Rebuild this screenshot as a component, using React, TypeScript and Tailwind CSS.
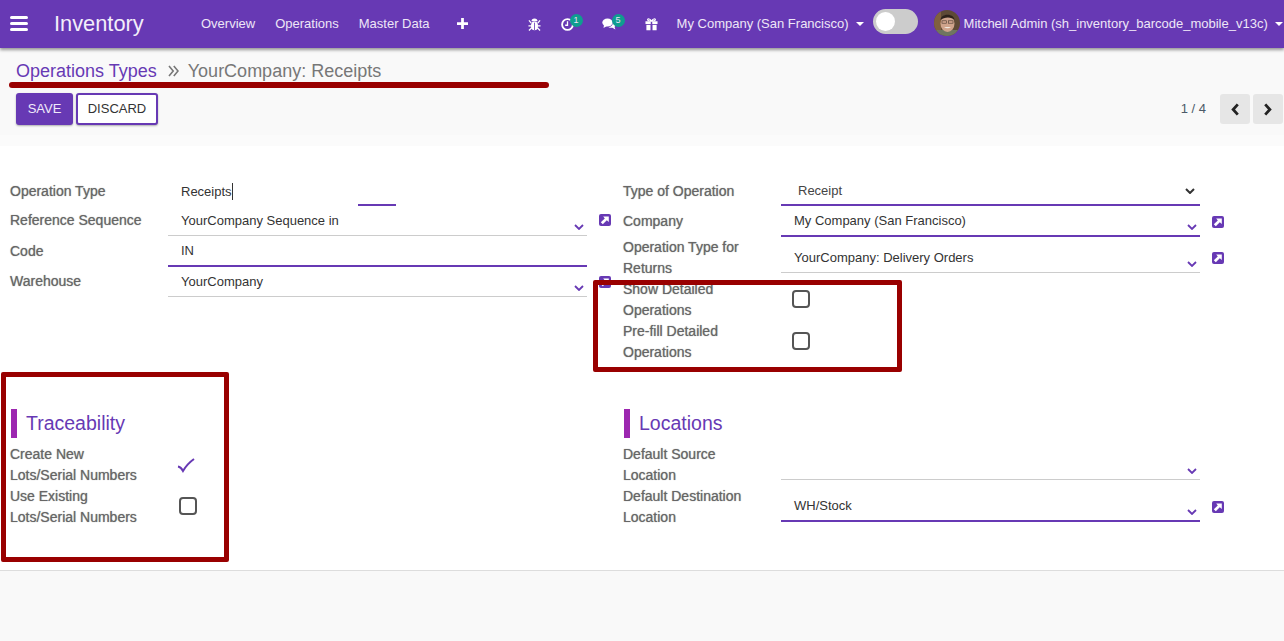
import React from "react";

const font = { fontFamily: '"Liberation Sans", Arial, sans-serif' };

function Ext({ className = "" }: { className?: string }) {
  return (
    <svg viewBox="0 0 12 12" className={"w-3 h-3 shrink-0 " + className}>
      <rect width="12" height="12" rx="2" fill="#6739b4" />
      <path d="M3.8 10.2 L1.8 8.2 L5.8 4.4 L4.2 2.4 H9.8 V8 L7.8 6.2 Z" fill="#fff" />
    </svg>
  );
}

function Chev({ dark = false }: { dark?: boolean }) {
  return (
    <svg viewBox="0 0 10 6" className="w-[10px] h-[6px]">
      <path d="M1 1 L5 5 L9 1" fill="none" stroke={dark ? "#333" : "#6739b4"} strokeWidth={dark ? 2 : 1.8} />
    </svg>
  );
}

function Label({ children, className = "" }: { children: React.ReactNode; className?: string }) {
  return (
    <div
      className={
        "w-[158px] shrink-0 text-[14px] leading-[21px] text-[#666] [text-shadow:0_0_1px_rgba(0,0,0,0.45)] " + className
      }
    >
      {children}
    </div>
  );
}

function Field({
  value,
  purple = false,
  chev = true,
  h,
  pad = "pl-[13px]",
}: {
  value: string;
  purple?: boolean;
  chev?: boolean;
  h: string;
  pad?: string;
}) {
  return (
    <div
      className={
        "relative w-[419px] flex items-start text-[13px] text-[#333] " +
        h +
        " " +
        pad +
        (purple ? " border-b-2 border-[#6739b4]" : " border-b border-[#ccc]")
      }
    >
      <span className="pt-[5px] leading-[20px]">{value}</span>
      {chev && (
        <span className="absolute right-[3px] bottom-[5px] flex">
          <Chev />
        </span>
      )}
    </div>
  );
}

function Check({ checked = false }: { checked?: boolean }) {
  if (checked) {
    return (
      <svg viewBox="0 0 18 16" className="w-[18px] h-4">
        <path d="M1 8.5 Q4 9 6 13 Q10 6 17 1" fill="none" stroke="#6739b4" strokeWidth="2" />
      </svg>
    );
  }
  return <div className="w-[18px] h-[18px] rounded-[4px] border-2 border-[#555] bg-white" />;
}

function Section({ title }: { title: string }) {
  return (
    <div className="flex items-center h-[29px] pl-px">
      <div className="w-[6px] h-[29px] bg-[#9c27b0]" />
      <div className="ml-[9px] text-[19.5px] leading-[29px] text-[#6739b4]">{title}</div>
    </div>
  );
}

function Bug() {
  return (
    <svg viewBox="0 0 14 14" className="w-[13px] h-[13px]" fill="#fff">
      <ellipse cx="7" cy="8.5" rx="3.8" ry="4.6" />
      <path d="M3.8 3.6 A3.2 3 0 0 1 10.2 3.6 Z" />
      <path d="M1 2.5 L3.5 5.5 M13 2.5 L10.5 5.5 M0.5 8.5 H3.5 M13.5 8.5 H10.5 M1 13.5 L4 10.5 M13 13.5 L10 10.5" stroke="#fff" strokeWidth="1.3" />
      <path d="M7 5 V13" stroke="#6739b4" strokeWidth="0.9" />
    </svg>
  );
}

function Clock() {
  return (
    <svg viewBox="0 0 14 14" className="w-[13px] h-[13px]">
      <circle cx="7" cy="7" r="5.8" fill="none" stroke="#fff" strokeWidth="2" />
      <path d="M7 3.5 V7.8 H4.5" fill="none" stroke="#fff" strokeWidth="1.4" />
    </svg>
  );
}

function Chat() {
  return (
    <svg viewBox="0 0 14 12" className="w-[14px] h-3" fill="#fff">
      <ellipse cx="5.5" cy="4.5" rx="5.2" ry="4" />
      <path d="M2 7 L1.5 10 L5 8 Z" />
      <path d="M11 3.5 C13 4.5 14 6 13.4 7.6 C13 8.6 12.6 9 12.6 9 L13.4 11.4 L10.4 9.8 C9 10 7.4 9.8 6.4 9 C9 9 11.4 7 11 3.5 Z" />
    </svg>
  );
}

function Gift() {
  return (
    <svg viewBox="0 0 14 14" className="w-[13px] h-[13px]" fill="#fff">
      <rect x="0.5" y="3.5" width="13" height="3" />
      <rect x="1.5" y="7.4" width="4.4" height="5.8" />
      <rect x="8.1" y="7.4" width="4.4" height="5.8" />
      <rect x="6.2" y="3.5" width="1.6" height="3" fill="#6739b4" />
      <path d="M7 3.4 C5.5 0.5 2.8 0.4 2.8 2 C2.8 3.4 5.5 3.4 7 3.4 Z M7 3.4 C8.5 0.5 11.2 0.4 11.2 2 C11.2 3.4 8.5 3.4 7 3.4 Z" fill="none" stroke="#fff" strokeWidth="1.2" />
    </svg>
  );
}

function Badge({ n }: { n: number }) {
  return (
    <span className="absolute -top-[4px] -right-[9px] w-[13px] h-[13px] rounded-full bg-[#0f9d8f] text-[9px] leading-[13px] text-center text-[#e8e0f5]">
      {n}
    </span>
  );
}

function Caret() {
  return <span className="inline-block w-0 h-0 border-x-[4px] border-x-transparent border-t-[4px] border-t-white" />;
}

function Avatar() {
  return (
    <svg viewBox="0 0 26 26" className="w-[26px] h-[26px] rounded-full shrink-0">
      <rect width="26" height="26" fill="#5e4a36" />
      <rect x="0" y="0" width="7" height="26" fill="#80603f" />
      <rect x="0" y="20" width="26" height="6" fill="#6f7560" />
      <ellipse cx="13.5" cy="13.5" rx="7" ry="8.5" fill="#cfa48c" />
      <path d="M6.5 10 C7 3 20 3 20.5 10 C18 6.5 10 6.5 6.5 10 Z" fill="#2e221a" />
      <rect x="8" y="10.8" width="4.6" height="2.4" fill="none" stroke="#4a3a30" strokeWidth="0.6" />
      <rect x="14.4" y="10.8" width="4.6" height="2.4" fill="none" stroke="#4a3a30" strokeWidth="0.6" />
      <path d="M10 17 Q13.5 19.5 17 17" fill="#f0e8e0" />
    </svg>
  );
}

export default function App() {
  return (
    <div style={font} className="relative w-[1284px] h-[641px] overflow-hidden bg-[#f9f9f9]">
      {/* Navbar */}
      <header className="relative z-10 h-12 bg-[#6739b4] shadow-[0_2px_3px_rgba(0,0,0,0.4)] flex items-center text-[#eee6f7] text-[13px] whitespace-nowrap">
        <div className="ml-[10px] w-[18px] flex flex-col gap-[3px] mb-[2px]">
          <div className="h-[3px] rounded-sm bg-white" />
          <div className="h-[3px] rounded-sm bg-white" />
          <div className="h-[3px] rounded-sm bg-white" />
        </div>
        <div className="ml-[26px] w-[90px] text-[21.8px] leading-none text-[#f3eefa]">Inventory</div>
        <div className="ml-[57px]">Overview</div>
        <div className="ml-5">Operations</div>
        <div className="ml-5">Master Data</div>
        <div className="ml-[27px] mb-[2px]">
          <svg viewBox="0 0 12 12" className="w-[11px] h-[11px]">
            <path d="M4.5 0 H7.5 V4.5 H12 V7.5 H7.5 V12 H4.5 V7.5 H0 V4.5 H4.5 Z" fill="#fff" />
          </svg>
        </div>
        <div className="ml-[60px]">
          <Bug />
        </div>
        <div className="relative ml-5">
          <Clock />
          <Badge n={1} />
        </div>
        <div className="relative ml-7">
          <Chat />
          <Badge n={5} />
        </div>
        <div className="ml-[29px]">
          <Gift />
        </div>
        <div className="ml-[19px]">My Company (San Francisco)</div>
        <div className="ml-[7px] flex">
          <Caret />
        </div>
        <div className="ml-[9px] mb-[5px] w-[45px] h-[25px] rounded-full bg-[#ccc] flex items-center pl-[3px]">
          <div className="w-[19px] h-[19px] rounded-full bg-white" />
        </div>
        <div className="ml-4 mb-[2px]">
          <Avatar />
        </div>
        <div className="ml-1">Mitchell Admin (sh_inventory_barcode_mobile_v13c)</div>
        <div className="ml-[7px] flex">
          <Caret />
        </div>
      </header>

      {/* Control panel */}
      <div className="h-[87px] bg-[#f9f9f9] relative">
        <div className="pl-4 pt-[11px] flex items-center text-[18px] leading-[24px]">
          <span className="text-[#6739b4]">Operations Types</span>
          <span className="ml-[11px] flex">
            <svg viewBox="0 0 11 12" className="w-[11px] h-3">
              <path d="M1 1 L5.2 6 L1 11 M5.8 1 L10 6 L5.8 11" fill="none" stroke="#777" strokeWidth="1.6" />
            </svg>
          </span>
          <span className="ml-[9px] text-[#777]">YourCompany: Receipts</span>
        </div>
        <div className="pl-4 pt-[10px] flex items-center gap-[3px] text-[13px]">
          <div className="w-[57px] h-8 rounded-[3px] bg-[#6739b4] text-[#f0eafa] flex items-center justify-center shadow-[0_1px_2px_rgba(0,0,0,0.3)]">
            SAVE
          </div>
          <div className="w-[82px] h-8 rounded-[3px] border-2 border-[#6739b4] bg-white text-[#333] flex items-center justify-center shadow-[0_1px_2px_rgba(0,0,0,0.3)]">
            DISCARD
          </div>
          <div className="ml-auto mr-[78px] text-[#4c5a68]">1 / 4</div>
        </div>
        <div className="absolute right-[1px] top-[46px] flex gap-[3px]">
          <div className="w-[30px] h-[30px] rounded-[3px] bg-[#e6e6e6] flex items-center justify-center">
            <svg viewBox="0 0 10 14" className="w-[10px] h-[13px]">
              <path d="M8 1.5 L3 7 L8 12.5" fill="none" stroke="#222" strokeWidth="3" />
            </svg>
          </div>
          <div className="w-[30px] h-[30px] rounded-[3px] bg-[#e6e6e6] flex items-center justify-center">
            <svg viewBox="0 0 10 14" className="w-[10px] h-[13px]">
              <path d="M2 1.5 L7 7 L2 12.5" fill="none" stroke="#222" strokeWidth="3" />
            </svg>
          </div>
        </div>
      </div>

      {/* Band */}
      <div className="h-[11px] bg-[#fbfbfb]" />

      {/* Sheet */}
      <main className="h-[425px] bg-white border-b border-[#ddd] pl-[10px] pt-[30px]">
        <div className="flex">
          {/* Left column */}
          <div className="w-[613px] shrink-0">
            <div className="flex items-start h-[30px]">
              <Label className="pt-[5px]">Operation Type</Label>
              <div className="relative w-[419px] h-[30px] pl-[13px] text-[13px] text-[#333]">
                <span className="inline-block border-r border-[#333] h-[17px] mt-[7px] leading-[17px]">Receipts</span>
                <div className="absolute left-[190px] bottom-0 w-[38px] h-[2px] bg-[#6739b4]" />
              </div>
            </div>
            <div className="flex items-start h-[30px]">
              <Label className="pt-[4px]">Reference Sequence</Label>
              <Field value="YourCompany Sequence in" h="h-[30px]" />
              <Ext className="ml-3 mt-[8px]" />
            </div>
            <div className="flex items-start h-[31px]">
              <Label className="pt-[5px]">Code</Label>
              <Field value="IN" purple chev={false} h="h-[31px]" />
            </div>
            <div className="flex items-start h-[30px]">
              <Label className="pt-[4px]">Warehouse</Label>
              <Field value="YourCompany" h="h-[30px]" />
              <Ext className="ml-3 mt-[9px]" />
            </div>
          </div>
          {/* Right column */}
          <div className="flex-1">
            <div className="flex items-start h-[30px]">
              <Label className="pt-[5px]">Type of Operation</Label>
              <div className="relative w-[419px] h-[30px] pl-[17px] text-[13px] text-[#444] border-b-2 border-[#6739b4]">
                <span className="inline-block pt-[5px] leading-[20px]">Receipt</span>
                <span className="absolute right-[5px] top-[12px] flex">
                  <Chev dark />
                </span>
              </div>
            </div>
            <div className="flex items-start h-[31px]">
              <Label className="pt-[5px]">Company</Label>
              <Field value="My Company (San Francisco)" purple h="h-[31px]" />
              <Ext className="ml-3 mt-[10px]" />
            </div>
            <div className="flex items-start h-[42px]">
              <Label>
                Operation Type for
                <br />
                Returns
              </Label>
              <Field value="YourCompany: Delivery Orders" h="h-[36px]" pad="pl-[13px] pt-[6px]" />
              <Ext className="ml-3 mt-[15px]" />
            </div>
            <div className="flex items-start h-[42px]">
              <Label>
                Show Detailed
                <br />
                Operations
              </Label>
              <div className="pl-[11px] pt-[11px]">
                <Check />
              </div>
            </div>
            <div className="flex items-start h-[42px]">
              <Label>
                Pre-fill Detailed
                <br />
                Operations
              </Label>
              <div className="pl-[11px] pt-[11px]">
                <Check />
              </div>
            </div>
          </div>
        </div>

        <div className="flex mt-[46px]">
          <div className="w-[613px] shrink-0">
            <Section title="Traceability" />
            <div className="mt-[6px] flex items-start h-[42px]">
              <Label className="w-[167px]">
                Create New
                <br />
                Lots/Serial Numbers
              </Label>
              <div className="pt-[14px]">
                <Check checked />
              </div>
            </div>
            <div className="flex items-start h-[42px]">
              <Label className="w-[169px]">
                Use Existing
                <br />
                Lots/Serial Numbers
              </Label>
              <div className="pt-[11px]">
                <Check />
              </div>
            </div>
          </div>
          <div className="flex-1">
            <Section title="Locations" />
            <div className="mt-[6px] flex items-start h-[42px]">
              <Label>
                Default Source
                <br />
                Location
              </Label>
              <Field value="" h="h-[36px]" />
            </div>
            <div className="flex items-start h-[42px]">
              <Label>
                Default Destination
                <br />
                Location
              </Label>
              <Field value="WH/Stock" purple h="h-[36px]" pad="pl-[13px] pt-[5px]" />
              <Ext className="ml-3 mt-[15px]" />
            </div>
          </div>
        </div>
      </main>

      {/* Annotation overlays */}
      <div className="absolute left-[9px] top-[82px] w-[540px] h-[6px] rounded-[3px] bg-[#990000]" />
      <div className="absolute left-[593px] top-[280px] w-[309px] h-[92px] rounded-[2px] border-[5px] border-[#990000]" />
      <div className="absolute left-[1px] top-[372px] w-[228px] h-[190px] rounded-[2px] border-[5px] border-[#990000]" />
    </div>
  );
}
